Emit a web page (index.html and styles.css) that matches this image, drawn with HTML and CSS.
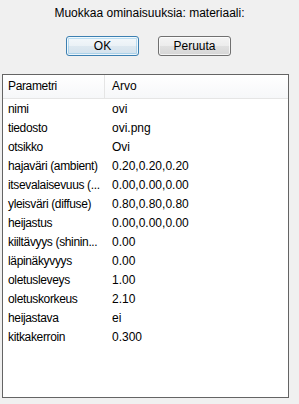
FILE: index.html
```html
<!DOCTYPE html>
<html lang="fi">
<head>
  <meta charset="UTF-8">
  <meta name="viewport" content="width=device-width, initial-scale=1.0">
  <title>Muokkaa ominaisuuksia</title>
  <link rel="stylesheet" href="styles.css">
</head>
<body>
  <div class="dialog">
    <p class="dialog-title">Muokkaa ominaisuuksia: materiaali:</p>
    <div class="dialog-buttons">
      <button class="btn btn-default">OK</button>
      <button class="btn">Peruuta</button>
    </div>
    <div class="prop-list">
      <div class="prop-head">
        <span class="cell cell-name">Parametri</span>
        <span class="cell cell-value">Arvo</span>
      </div>
      <div class="prop-row"><span class="cell cell-name">nimi</span><span class="cell cell-value">ovi</span></div>
      <div class="prop-row"><span class="cell cell-name">tiedosto</span><span class="cell cell-value">ovi.png</span></div>
      <div class="prop-row"><span class="cell cell-name">otsikko</span><span class="cell cell-value">Ovi</span></div>
      <div class="prop-row"><span class="cell cell-name">hajaväri (ambient)</span><span class="cell cell-value">0.20,0.20,0.20</span></div>
      <div class="prop-row"><span class="cell cell-name">itsevalaisevuus (...</span><span class="cell cell-value">0.00,0.00,0.00</span></div>
      <div class="prop-row"><span class="cell cell-name">yleisväri (diffuse)</span><span class="cell cell-value">0.80,0.80,0.80</span></div>
      <div class="prop-row"><span class="cell cell-name">heijastus</span><span class="cell cell-value">0.00,0.00,0.00</span></div>
      <div class="prop-row"><span class="cell cell-name">kiiltävyys (shinin...</span><span class="cell cell-value">0.00</span></div>
      <div class="prop-row"><span class="cell cell-name">läpinäkyvyys</span><span class="cell cell-value">0.00</span></div>
      <div class="prop-row"><span class="cell cell-name">oletusleveys</span><span class="cell cell-value">1.00</span></div>
      <div class="prop-row"><span class="cell cell-name">oletuskorkeus</span><span class="cell cell-value">2.10</span></div>
      <div class="prop-row"><span class="cell cell-name">heijastava</span><span class="cell cell-value">ei</span></div>
      <div class="prop-row"><span class="cell cell-name">kitkakerroin</span><span class="cell cell-value">0.300</span></div>
    </div>
  </div>
</body>
</html>
```
FILE: styles.css
```css
* {
  margin: 0;
  padding: 0;
  box-sizing: border-box;
}

body {
  font-family: 'Liberation Sans', Arial, sans-serif;
  font-size: 12px;
  color: #000;
  background-color: #f0f0f0;
}

.dialog {
  padding: 5px 10px 0 2px;
}

.dialog-title {
  text-align: center;
  line-height: 16px;
  padding-left: 8px;
}

/* Buttons */
.dialog-buttons {
  display: flex;
  justify-content: center;
  gap: 19px;
  margin-top: 15px;
  padding-left: 6px;
}

.btn {
  width: 73px;
  height: 20px;
  font-family: inherit;
  font-size: 12px;
  color: #000;
  border: 1px solid #707070;
  border-radius: 3px;
  background: linear-gradient(#f4f4f4 0%, #ececec 50%, #e0e0e0 51%, #d6d6d6 100%);
  box-shadow: inset 0 0 0 1px rgba(255, 255, 255, 0.7);
}

.btn-default {
  border-color: #3c7fb1;
  background: linear-gradient(#f4f8fb 0%, #eaf1f6 50%, #dde8f0 51%, #d3e1ec 100%);
  box-shadow: inset 0 0 0 1px rgba(255, 255, 255, 0.8), inset 0 0 0 2px rgba(120, 190, 230, 0.45);
}

/* Property list */
.prop-list {
  margin-top: 18px;
  height: 324px;
  border: 1px solid #646464;
  background: #fff;
}

.prop-head {
  display: flex;
  height: 24px;
  border-bottom: 1px solid #e5e5e5;
  background: linear-gradient(#ffffff, #f6f7f9);
}

.prop-head .cell {
  line-height: 23px;
}

.prop-head .cell-name {
  border-right: 1px solid #e5e5e5;
}

.prop-row {
  display: flex;
  height: 19px;
  padding-top: 1px;
}

.cell {
  line-height: 19px;
  white-space: nowrap;
}

.cell-name {
  width: 102px;
  padding-left: 5px;
  letter-spacing: -0.35px;
}

.cell-value {
  flex: 1;
  padding-left: 7px;
}
```
